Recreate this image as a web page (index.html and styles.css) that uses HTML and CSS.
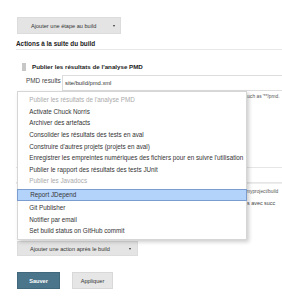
FILE: index.html
```html
<!DOCTYPE html>
<html lang="fr">
<head>
<meta charset="utf-8">
<title>Configuration du build</title>
<link rel="stylesheet" href="styles.css">
</head>
<body>
<div class="page">
  <div class="toolbar">
    <button class="btn btn-dd step">Ajouter une étape au build<span class="caret"></span></button>
  </div>
  <div class="section-title">Actions à la suite du build</div>

  <div class="publisher">
    <div class="pub-head"><span class="grip"></span><span>Publier les résultats de l'analyse PMD</span></div>
    <div class="field">
      <label class="field-label">PMD results</label>
      <div class="input">site/build/pmd.xml</div>
    </div>
    <div class="help">such as '**/pmd.</div>
  </div>

  <div class="publisher second">
    <div class="pub-head2"></div>
    <div class="input2"><span class="tail">myproject/build</span></div>
    <div class="help2">s avec succ</div>
  </div>

  <div class="actions-bar">
    <button class="btn btn-dd action">Ajouter une action après le build<span class="caret"></span></button>
  </div>

  <div class="form-buttons">
    <button class="btn primary">Sauver</button>
    <button class="btn apply">Appliquer</button>
  </div>

  <ul class="menu">
    <li class="item disabled">Publier les résultats de l'analyse PMD</li>
    <li class="item">Activate Chuck Norris</li>
    <li class="item">Archiver des artefacts</li>
    <li class="item">Consolider les résultats des tests en aval</li>
    <li class="item">Construire d'autres projets (projets en aval)</li>
    <li class="item">Enregistrer les empreintes numériques des fichiers pour en suivre l'utilisation</li>
    <li class="item">Publier le rapport des résultats des tests JUnit</li>
    <li class="item disabled">Publier les Javadocs</li>
    <li class="item active">Report JDepend</li>
    <li class="item">Git Publisher</li>
    <li class="item">Notifier par email</li>
    <li class="item">Set build status on GitHub commit</li>
  </ul>
</div>
</body>
</html>
```

FILE: styles.css
```css
html, body {
  margin: 0;
  padding: 0;
  background: #ffffff;
  overflow: hidden;
}

body {
  font-family: "Liberation Sans", Arial, sans-serif;
  color: #333333;
  width: 282px;
  height: 300px;
}

.page {
  position: relative;
  padding: 17px 0 0 16px;
}

.btn {
  font-family: "Liberation Sans", Arial, sans-serif;
  font-size: 5.6px;
  color: #333333;
  background: #e4e4e4;
  border: 1px solid #dcdcdc;
  border-radius: 0;
  padding: 0;
  margin: 0;
  box-sizing: border-box;
  display: flex;
  align-items: center;
  justify-content: center;
}

.btn-dd {
  position: relative;
  justify-content: flex-start;
}

.caret {
  width: 0;
  height: 0;
  border-left: 1.8px solid transparent;
  border-right: 1.8px solid transparent;
  border-top: 2.2px solid #333333;
}

.toolbar {
  display: flex;
  padding-left: 1px;
}

.step {
  width: 104px;
  height: 17px;
  padding-left: 13px;
}

.step .caret {
  margin-left: 17px;
}

.section-title {
  margin-top: 3px;
  height: 12px;
  line-height: 13px;
  font-size: 6.4px;
  font-weight: bold;
  color: #222222;
  border-bottom: 1px solid #e8e8e8;
}

.publisher {
  font-size: 6.4px;
}

.pub-head {
  margin-top: 11px;
  height: 11px;
  display: flex;
  align-items: center;
  padding-left: 6px;
  font-weight: bold;
  font-size: 6.2px;
  color: #222222;
}

.grip {
  width: 4px;
  height: 8px;
  margin-right: 6px;
  background-image: radial-gradient(circle, #c4c4c4 0.7px, transparent 0.8px);
  background-size: 2px 2px;
  background-color: #f2f2f2;
}

.field {
  margin-top: 3px;
  display: flex;
  align-items: flex-start;
}

.field-label {
  width: 46px;
  padding-left: 10px;
  box-sizing: border-box;
  line-height: 12px;
  color: #444444;
}

.input {
  flex: 1;
  height: 16px;
  box-sizing: border-box;
  border: 1px solid #dddddd;
  border-right: none;
  font-size: 5.8px;
  line-height: 14px;
  padding-left: 2px;
  color: #333333;
}

.help {
  margin-top: 1px;
  height: 10px;
  line-height: 10px;
  font-size: 4.8px;
  padding-left: 229px;
  white-space: nowrap;
  color: #555555;
}

.second {
  margin-top: 65px;
  border-top: 1px solid #e6e6e6;
}

.pub-head2 {
  height: 14px;
  border-bottom: 1px solid #e6e6e6;
}

.input2 {
  height: 16px;
  box-sizing: border-box;
  line-height: 15px;
  font-size: 4.8px;
  padding-left: 230px;
  white-space: nowrap;
  color: #555555;
  border-top: 1px solid #ededed;
}

.help2 {
  height: 9px;
  line-height: 9px;
  font-size: 5.4px;
  padding-left: 231px;
  white-space: nowrap;
  color: #444444;
}

.actions-bar {
  margin-top: 33px;
  display: flex;
  padding-left: 1px;
}

.action {
  width: 121px;
  height: 15px;
  padding-left: 12px;
}

.action .caret {
  margin-left: 19px;
}

.form-buttons {
  margin-top: 16px;
  display: flex;
  gap: 12px;
  padding-left: 1px;
}

.primary {
  width: 43px;
  height: 17px;
  background: #4b758b;
  border-color: #42687d;
  color: #ffffff;
  font-weight: bold;
}

.apply {
  width: 41px;
  height: 17px;
  background: #e6e6e6;
  border-color: #d8d8d8;
}

.menu {
  position: absolute;
  left: 17px;
  top: 91px;
  width: 230px;
  box-sizing: border-box;
  margin: 0;
  padding: 2.2px 0 2px;
  list-style: none;
  background: #ffffff;
  border: 1px solid #d6d6d6;
  box-shadow: 2px 2px 4px rgba(0, 0, 0, 0.2);
  font-size: 6.3px;
}

.item {
  height: 11.6px;
  line-height: 11.6px;
  padding-left: 11.3px;
  white-space: nowrap;
  color: #333333;
}

.item.disabled {
  color: #aaaaaa;
}

.item.active {
  height: 12px;
  line-height: 10px;
  margin: 2px -1px 1px;
  padding-left: 12.3px;
  box-sizing: border-box;
  background: #b3d3fb;
  border: 1px solid #7a9ccf;
}
```
